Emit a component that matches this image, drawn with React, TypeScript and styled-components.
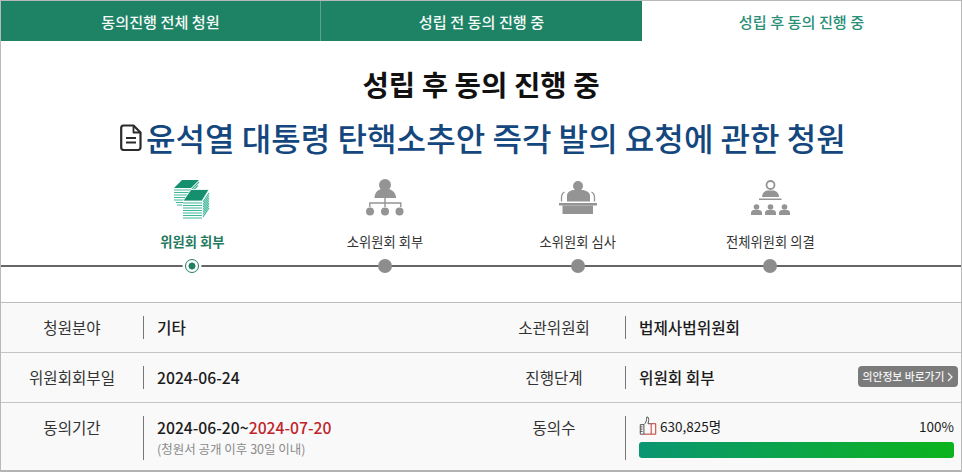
import React from "react";
import styled, { createGlobalStyle } from "styled-components";

const Global = createGlobalStyle`
  html, body { margin: 0; padding: 0; background: #fff; overflow: hidden; }
  * { box-sizing: border-box; }
  body { font-family: "Noto Sans CJK KR", "Noto Sans", sans-serif; color: #222; }
`;

const Frame = styled.div`
  width: 962px;
  height: 472px;
  background: #fff;
  border: 1px solid #b9b9b9;
  border-bottom: 0;
  display: flex;
  flex-direction: column;
`;

const Tabs = styled.nav`
  display: grid;
  grid-template-columns: 319px 322px 319px;
  height: 40px;
  flex: none;
`;

const Tab = styled.a<{ $active?: boolean; $divider?: boolean }>`
  display: flex;
  align-items: center;
  justify-content: center;
  font-size: 15.2px;
  font-weight: 500;
  color: ${(p) => (p.$active ? "#2a8f77" : "#f3faf7")};
  background: ${(p) => (p.$active ? "#fff" : "#1e8265")};
  border-left: ${(p) => (p.$divider ? "1px solid #5ba48f" : "0")};
`;

const Heading = styled.h2`
  margin: 23px 0 0;
  height: 40px;
  line-height: 40px;
  text-align: center;
  font-size: 28.7px;
  font-weight: 700;
  color: #111;
`;

const Title = styled.h1`
  margin: 11px 0 0;
  height: 44px;
  display: flex;
  align-items: center;
  justify-content: center;
  gap: 4px;
  font-size: 32.1px;
  font-weight: 500;
  color: #14477e;
  padding-left: 4px;
`;

const Steps = styled.ol`
  list-style: none;
  margin: 18px 0 0;
  padding: 0 95px;
  display: grid;
  grid-template-columns: repeat(4, 192.7px);
  height: 96px;
  flex: none;
  background: linear-gradient(#666, #666) no-repeat 0 88px / 100% 2px;
`;

const Step = styled.li`
  display: flex;
  flex-direction: column;
  align-items: center;
`;

const StepIcon = styled.div`
  height: 40px;
  display: flex;
  align-items: center;
  justify-content: center;
`;

const PapersSvg = styled.svg`
  display: block;
  margin-top: 3px;
`;

const StepLabel = styled.span<{ $active?: boolean }>`
  margin-top: 15px;
  height: 20px;
  line-height: 20px;
  font-size: 13.3px;
  font-weight: ${(p) => (p.$active ? 700 : 400)};
  color: ${(p) => (p.$active ? "#1f7a5f" : "#333")};
`;

const Dot = styled.span<{ $active?: boolean }>`
  margin-top: 7px;
  width: 14px;
  height: 14px;
  border-radius: 50%;
  background: #8d8d8d;
  ${(p) =>
    p.$active &&
    `
    background: radial-gradient(circle, #1e7f63 0 3.2px, #fff 3.8px);
    border: 1.6px solid #1e7f63;
    box-shadow: 0 0 0 2.5px #fff;
  `}
`;

const Info = styled.section`
  margin-top: 29px;
  background: #f9f9f9;
  border-top: 1px solid #bdbdbd;
  border-bottom: 2px solid #b3b3b3;
  flex: none;
`;

const Row = styled.div<{ $tall?: boolean }>`
  height: ${(p) => (p.$tall ? "68px" : "50px")};
  display: grid;
  grid-template-columns: 142px 1fr 142px 336px;
  border-top: 1px solid #c4c4c4;
  &:first-child {
    border-top: 0;
    height: 49px;
  }
`;

const Label = styled.div`
  font-size: 15.6px;
  color: #333;
  text-align: center;
  padding-top: 12px;
  line-height: 24px;
`;

const Value = styled.div`
  margin: 13px 0 0;
  display: flex;
  flex-direction: column;
  align-items: stretch;
  min-height: 23px;
  padding-left: 13px;
  border-left: 1px solid #777;
  height: calc(100% - 26px);
  font-size: 15.7px;
  font-weight: 500;
  color: #1c1c1c;
  line-height: 23px;
`;

const ValueTall = styled(Value)`
  height: 44px;
`;

const ValueWide = styled(Value)`
  flex-direction: row;
  justify-content: space-between;
  padding-right: 3px;
`;

const Red = styled.span`
  color: #c0242b;
`;

const Note = styled.span`
  font-size: 12.5px;
  font-weight: 400;
  color: #8a8a8a;
  line-height: 15px;
  margin-top: 2px;
`;

const GoButton = styled.a`
  display: inline-flex;
  align-items: center;
  justify-content: center;
  gap: 3px;
  width: 100px;
  height: 21px;
  border-radius: 4px;
  background: #7b7b7b;
  color: #f2f2f2;
  font-size: 10.8px;
  font-weight: 500;
  line-height: 21px;
  white-space: nowrap;
`;

const Counts = styled.div`
  display: flex;
  justify-content: space-between;
  align-items: center;
  height: 20px;
  padding-right: 7px;
  font-size: 13.5px;
  font-weight: 400;
  line-height: 20px;
`;

const Percent = styled.span`
  font-weight: 400;
  font-size: 13.5px;
`;

const Signers = styled.span`
  display: inline-flex;
  align-items: center;
  gap: 3px;
`;

const Bar = styled.div`
  margin-top: 6px;
  height: 16px;
  margin-right: 7px;
  border-radius: 3px;
  background: linear-gradient(90deg, #0a9672, #0cb41c);
`;

const DocIcon = () => (
  <svg width="22" height="27" viewBox="0 0 22 27" fill="none" stroke="#2b2b2b" strokeWidth="2.200" strokeLinejoin="round">
    <path d="M3.500 1.500h10l7 7v15a2.500 2.500 0 0 1-2.500 2.500H3.500A2.500 2.500 0 0 1 1.200 23.500V4a2.500 2.500 0 0 1 2.300-2.500z" />
    <path d="M13.500 1.500v7h7" strokeWidth="1.800" />
    <path d="M6 14h10M6 18.500h10" strokeWidth="2" />
  </svg>
);

const PapersIcon = () => (
  <PapersSvg width="36" height="42" viewBox="0 0 36 42">
    <path d="M0 10l8-8h17l-8 8z" fill="#14906f" />
    <g stroke="#3fb79a" strokeWidth="1.100">
      <path d="M0 12h17M0 14.500h17M0 17h17M0 19.500h13M0 22h11M2 24.500h7M3 27h5" />
      <path d="M18 11l7-7M18 13.500l6-6M18 16l4-4" />
    </g>
    <path d="M9 23l8-11.500h18l-7 11.500z" fill="#14906f" stroke="#fff" strokeWidth="0.800" />
    <g stroke="#3fb79a" strokeWidth="1.100">
      <path d="M9 25h19M9 27.500h19M9 30h19M9 32.500h19M9 35h19M9 37.500h19M9 40h19" />
      <path d="M29 24l6-9M29 26.500l6-9M29 29l6-9M29 31.500l6-9M29 34l6-9M29 36.500l6-9M29 39l6-9" />
    </g>
  </PapersSvg>
);

const G = "#949494";

const OrgIcon = () => (
  <svg width="38" height="37" viewBox="0 0 38 37" fill={G}>
    <circle cx="19" cy="6" r="6" />
    <path d="M8.500 19c0-5 3-8 6.500-9h8c3.500 1 7 4 7 9z" />
    <path d="M18.300 19h1.400v4.300h15.800V28h-1.400v-3.300H19.700V28h-1.400v-3.300H4.500V28H3.100v-4.700h15.200z" />
    <circle cx="4" cy="32.500" r="4" />
    <circle cx="19" cy="32.500" r="4" />
    <circle cx="33.500" cy="32.500" r="4" />
  </svg>
);

const PodiumIcon = () => (
  <svg width="38" height="33" viewBox="0 0 38 33" fill={G}>
    <circle cx="19" cy="5" r="5" />
    <path d="M8 20.500v-6c0-3 3-5 6-5.500h10c3 .5 7 2.500 7 5.500v6z" />
    <path d="M0 22h38v2.500H0z" />
    <path d="M3.500 24.500H34V33H3.500z" />
    <path d="M2.500 20.500v-4c0-3 1-4.500 3-5.500" fill="none" stroke={G} strokeWidth="1.300" />
    <path d="M35.500 20.500v-4c0-3-1-4.500-3-5.500" fill="none" stroke={G} strokeWidth="1.300" />
  </svg>
);

const Person = ({ x }: { x: number }) => (
  <g transform={`translate(${x} 24)`}>
    <circle cx="5.500" cy="3" r="2.800" />
    <path d="M0 11v-2c0-2 1.500-3 3-3h5c1.500 0 3 1 3 3v2z" />
  </g>
);

const AssemblyIcon = () => (
  <svg width="39" height="35" viewBox="0 0 39 35" fill={G}>
    <circle cx="19.500" cy="5" r="4" fill="none" stroke={G} strokeWidth="1.800" />
    <path d="M11 17c0-4 3-6.500 6-6.500h5c3 0 6 2.500 6 6.500z" />
    <path d="M8 18.500h22.500V20H8z" />
    <Person x={0} />
    <Person x={14} />
    <Person x={28} />
  </svg>
);

const ThumbIcon = () => (
  <svg width="18" height="20" viewBox="0 0 19 22" fill="none" strokeWidth="1.100">
    <path d="M1 9.500h4v10.500H1z M1 12h2.500M1 14.500h2.500M1 17h2.500" stroke="#555" />
    <path d="M5 9.500c2-1.500 3-4 3.200-8.500 2 0 2.300 2 2 4l-.7 3.500H13" stroke="#555" />
    <path d="M13 8.500h5V20h-5z" stroke="#c6382f" />
    <path d="M5 20h8" stroke="#c6382f" />
  </svg>
);

const Chevron = () => (
  <svg width="6" height="10" viewBox="0 0 6 10" fill="none" stroke="#f2f2f2" strokeWidth="1.200">
    <path d="M1 1l4 4-4 4" />
  </svg>
);

const steps = [
  { label: "위원회 회부", icon: <PapersIcon />, active: true },
  { label: "소위원회 회부", icon: <OrgIcon /> },
  { label: "소위원회 심사", icon: <PodiumIcon /> },
  { label: "전체위원회 의결", icon: <AssemblyIcon /> },
];

export default function App() {
  return (
    <Frame>
      <Global />
      <Tabs>
        <Tab>동의진행 전체 청원</Tab>
        <Tab $divider>성립 전 동의 진행 중</Tab>
        <Tab $active>성립 후 동의 진행 중</Tab>
      </Tabs>
      <Heading>성립 후 동의 진행 중</Heading>
      <Title>
        <DocIcon />
        윤석열 대통령 탄핵소추안 즉각 발의 요청에 관한 청원
      </Title>
      <Steps>
        {steps.map((s) => (
          <Step key={s.label}>
            <StepIcon>{s.icon}</StepIcon>
            <StepLabel $active={s.active}>{s.label}</StepLabel>
            <Dot $active={s.active} />
          </Step>
        ))}
      </Steps>
      <Info>
        <Row>
          <Label>청원분야</Label>
          <Value>기타</Value>
          <Label>소관위원회</Label>
          <Value>법제사법위원회</Value>
        </Row>
        <Row>
          <Label>위원회회부일</Label>
          <Value>2024-06-24</Value>
          <Label>진행단계</Label>
          <ValueWide>
            위원회 회부
            <GoButton>
              의안정보 바로가기 <Chevron />
            </GoButton>
          </ValueWide>
        </Row>
        <Row $tall>
          <Label>동의기간</Label>
          <ValueTall>
            <span>
              2024-06-20~<Red>2024-07-20</Red>
            </span>
            <Note>(청원서 공개 이후 30일 이내)</Note>
          </ValueTall>
          <Label>동의수</Label>
          <ValueTall>
            <Counts>
              <Signers>
                <ThumbIcon />
                630,825명
              </Signers>
              <Percent>100%</Percent>
            </Counts>
            <Bar />
          </ValueTall>
        </Row>
      </Info>
    </Frame>
  );
}
